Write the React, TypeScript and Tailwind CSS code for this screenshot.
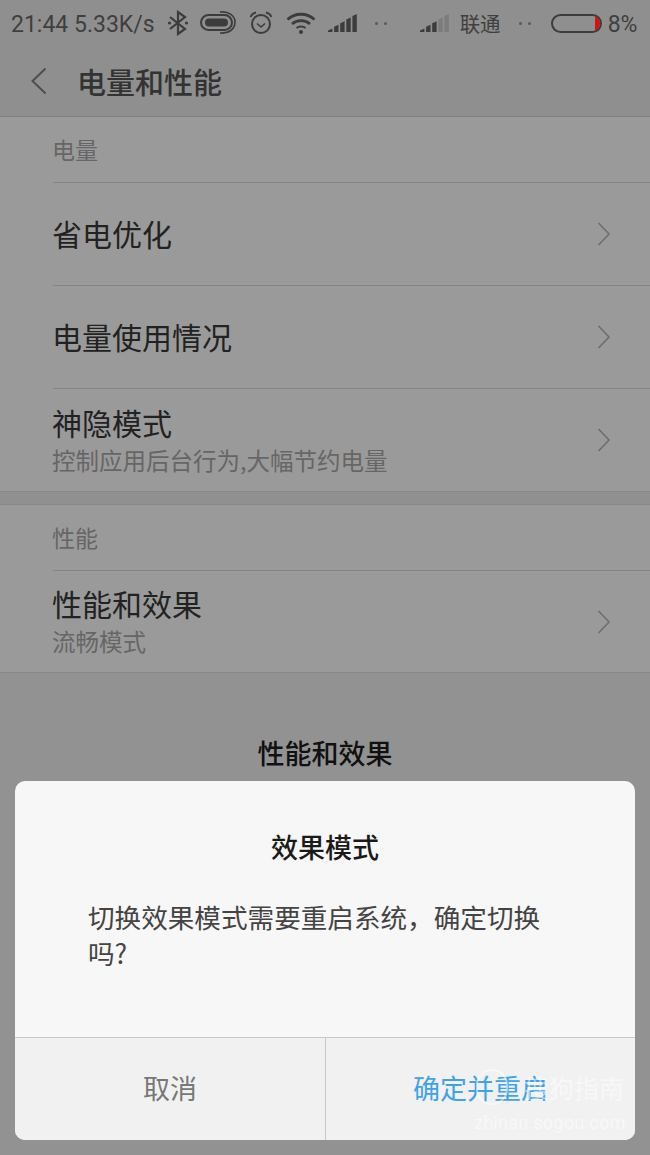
import React from "react";

const CJK = "font-['Noto_Sans_CJK_SC','Noto_Sans',sans-serif]";

const Chevron = () => (
  <svg width="16" height="26" viewBox="0 0 16 26" fill="none" className="text-[#6e6e6e]">
    <path d="M2.5 2 L13 13 L2.5 24" stroke="currentColor" strokeWidth="1.6" />
  </svg>
);

// bars rise along a slanted top edge, like the stock signal glyph
const Signal = ({ lit }: { lit: number }) => (
  <svg width="30" height="20" viewBox="0 0 30 20">
    {[0, 1, 2, 3, 4].map((i) => {
      const x = i * 6.1;
      const top = (a: number) => 19 - (a + 1) * 3.6;
      return (
        <polygon
          key={i}
          points={`${x},19 ${x + 4.4},19 ${x + 4.4},${top(i)} ${x},${top(i) + 2}`}
          fill={i < lit ? "#3c3c3c" : "#7c7c7c"}
        />
      );
    })}
  </svg>
);

const Dots = () => (
  <span className="flex gap-[6px]">
    <span className="w-[3px] h-[3px] rounded-full bg-[#5a5a5a]" />
    <span className="w-[3px] h-[3px] rounded-full bg-[#5a5a5a]" />
  </span>
);

const StatusBar = () => (
  <div className="h-[46px] flex items-center pl-[11px] text-[#3f3f3f] font-['Roboto',sans-serif] text-[23px] leading-none">
    <span className="mt-[2px]">21:44 5.33K/s</span>
    {/* bluetooth */}
    <svg width="22" height="26" viewBox="0 0 22 26" fill="none" className="ml-[12px]">
      <path d="M3 7 L18 19 L11 24 L11 2 L18 7 L3 19" stroke="#3c3c3c" strokeWidth="2.2" />
      <circle cx="2.5" cy="13" r="1.6" fill="#3c3c3c" />
      <circle cx="19.5" cy="13" r="1.6" fill="#3c3c3c" />
    </svg>
    {/* hd call pill */}
    <svg width="36" height="26" viewBox="0 0 36 26" fill="none" className="ml-[11px]">
      <rect x="1" y="5" width="31" height="15" rx="7.5" stroke="#3c3c3c" strokeWidth="2" />
      <rect x="5" y="8.5" width="23" height="8" rx="4" fill="#3c3c3c" />
      <path d="M20 2 C29 1 35 6 35 12 C35 19 29 24 20 23" stroke="#3c3c3c" strokeWidth="1.6" />
    </svg>
    {/* alarm */}
    <svg width="24" height="26" viewBox="0 0 24 26" fill="none" className="ml-[13px]">
      <circle cx="12" cy="14" r="9" stroke="#3c3c3c" strokeWidth="2" />
      <path d="M8 13.5 L12 17 L16 13.5" stroke="#3c3c3c" strokeWidth="1.6" />
      <path d="M1.5 7 C2.5 4.5 4.5 3 7 2.5 M22.5 7 C21.5 4.5 19.5 3 17 2.5" stroke="#3c3c3c" strokeWidth="1.8" />
    </svg>
    {/* wifi */}
    <svg width="30" height="24" viewBox="0 0 30 24" fill="none" className="ml-[13px]">
      <path d="M1.5 8.5 C9 1.5 21 1.5 28.5 8.5" stroke="#3c3c3c" strokeWidth="2.8" />
      <path d="M6 13 C11 8.5 19 8.5 24 13" stroke="#3c3c3c" strokeWidth="2.6" />
      <path d="M10.5 17 C13 15 17 15 19.5 17" stroke="#3c3c3c" strokeWidth="2.2" />
      <circle cx="15" cy="21" r="2" fill="#3c3c3c" />
    </svg>
    <span className="ml-[12px]"><Signal lit={5} /></span>
    <span className="ml-[17px]"><Dots /></span>
    <span className="ml-[33px]"><Signal lit={3} /></span>
    <span className={`${CJK} ml-[10px] text-[20.5px]`}>联通</span>
    <span className="ml-[18px]"><Dots /></span>
    {/* battery */}
    <div className="ml-[20px] w-[51px] h-[19px] rounded-full border-2 border-[#3c3c3c] relative overflow-hidden">
      <div className="absolute right-0 top-0 bottom-0 w-[5px] bg-[#d81010]" />
    </div>
    <span className="ml-[6px] mt-[2px]">8%</span>
  </div>
);

const Row = ({ title, sub, divider, height }: { title: string; sub?: string; divider?: boolean; height: string }) => (
  <div className={`${height} ml-[53px] flex items-center pr-[38px] ${divider ? "border-b border-[#858585]" : ""}`}>
    <div className="flex-1 -ml-[1px] -mt-[2px]">
      <div className="text-[30px] leading-[36px] text-[#222]">{title}</div>
      {sub && <div className="text-[23.5px] leading-[30px] text-[#666] mt-[5px]">{sub}</div>}
    </div>
    <Chevron />
  </div>
);

const SectionLabel = ({ label }: { label: string }) => (
  <div className="h-[66px] ml-[53px] flex items-center border-b border-[#858585] text-[23px] text-[#666]">
    <span className="-ml-[1px]">{label}</span>
  </div>
);

export default function App() {
  return (
    <div className={`${CJK} w-[650px] h-[1155px] overflow-hidden bg-[#929292] relative`}>
      <div className="bg-[#8f8f8f]">
        <StatusBar />
        <div className="h-[71px] flex items-center pl-[30px] border-b border-[#808080]">
          <svg width="18" height="28" viewBox="0 0 18 28" fill="none">
            <path d="M15.5 1.5 L2.5 14 L15.5 26.5" stroke="#4e4e4e" strokeWidth="2" />
          </svg>
          <span className="ml-[29px] text-[29px] leading-none font-medium text-[#333]">电量和性能</span>
        </div>
      </div>

      <div className="bg-[#9a9a9a]">
        <SectionLabel label="电量" />
        <Row title="省电优化" divider height="h-[103px]" />
        <Row title="电量使用情况" divider height="h-[103px]" />
        <Row title="神隐模式" sub="控制应用后台行为,大幅节约电量" height="h-[102px]" />
      </div>
      <div className="h-[14px] bg-[#909090] border-y border-[#878787]" />
      <div className="bg-[#9a9a9a] border-b border-[#878787]">
        <SectionLabel label="性能" />
        <Row title="性能和效果" sub="流畅模式" height="h-[101px]" />
      </div>

      <div className="mt-[62px] text-center text-[27px] leading-[36px] font-medium text-[#111]">性能和效果</div>

      <div className="mx-[15px] mt-[10px] h-[359px] rounded-[10px] bg-[#f7f7f7] overflow-hidden flex flex-col">
        <div className="h-[257px] border-b border-[#c8c8c8]">
          <div className="pt-[48px] text-center text-[27px] leading-[36px] font-medium text-[#1a1a1a]">效果模式</div>
          <div className="mt-[34px] px-[73px] text-[26.6px] leading-[36px] text-[#444]">切换效果模式需要重启系统，确定切换吗?</div>
        </div>
        <div className="flex-1 flex bg-[#f1f1f1] text-[27px]">
          <div className="w-[311px] border-r border-[#c8c8c8] flex items-center justify-center text-[#777] pb-[2px]">取消</div>
          <div className="flex-1 flex items-center justify-center text-[#3fa3e8] pb-[2px]">确定并重启</div>
        </div>
      </div>

      {/* site watermark over the dialog corner */}
      <div className="absolute left-[474px] top-[1067px] w-[156px] text-white/50">
        <div className="flex items-center h-[40px]">
          <span className="ml-[2px] w-[32px] h-[36px] rounded-full border-2 border-white/50 shrink-0" />
          <span className="text-[25px] leading-none ml-[16px] whitespace-nowrap">搜狗指南</span>
        </div>
        <div className="mt-[4px] text-[18.5px] leading-[24px] font-['Roboto',sans-serif] whitespace-nowrap">zhinan.sogou.com</div>
      </div>
    </div>
  );
}
